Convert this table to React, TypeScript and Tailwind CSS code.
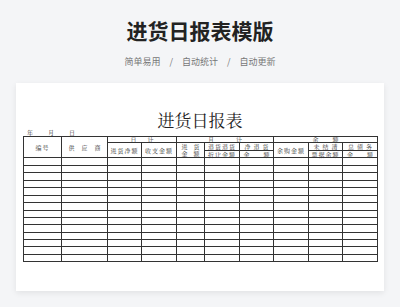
import type { ReactNode } from 'react'

const sans = { fontFamily: '"Noto Sans CJK SC", "Noto Sans", sans-serif' }
const serif = { fontFamily: '"Noto Serif CJK SC", "Noto Sans CJK SC", serif' }

function Cell({ className = '', children }: { className?: string; children?: ReactNode }) {
  return (
    <div className={`flex flex-col items-center justify-center border-r border-b border-[#333] text-[6px] leading-[7px] text-[#333] ${className}`}>
      {children}
    </div>
  )
}

export default function App() {
  const body = Array.from({ length: 140 }, (_, i) => <Cell key={i} />)

  return (
    <div className="flex h-[307px] w-[400px] flex-col items-center bg-[#f4f5f7] pt-[16px]" style={sans}>
      <h1 className="text-[21px] font-bold leading-[28px] text-[#222]">进货日报表模版</h1>
      <div className="mt-[12px] flex items-center gap-[9px] text-[9px] leading-[12px] text-[#777]">
        <span>简单易用</span>
        <span>/</span>
        <span>自动统计</span>
        <span>/</span>
        <span>自动更新</span>
      </div>

      <div className="mt-[15px] flex h-[208px] w-[368px] flex-col bg-white pt-[28px] shadow-[0_2px_6px_rgba(0,0,0,0.08)]">
        <div className="text-center text-[17px] leading-[18px] text-[#222]" style={serif}>
          进货日报表
        </div>
        <div className="ml-[11px] flex h-[7px] gap-[15px] text-[6px] leading-[7px] text-[#333]" style={serif}>
          <span>年</span>
          <span>月</span>
          <span>日</span>
        </div>

        <div
          className="ml-[7px] grid w-[355px] grid-cols-[38px_46px_34px_35px_28px_35px_34px_35px_34px_35px] grid-rows-[6px_8px_7px_8px_7px_8px_7px_8px_7px_8px_7px_7px_8px_7px_7px_8px_7px] border-t border-l border-[#333]"
          style={serif}
        >
          <Cell className="col-start-1 row-start-1 row-span-3 tracking-[1px]">编号</Cell>
          <Cell className="col-start-2 row-start-1 row-span-3">
            <div className="flex gap-[7px]">
              <span>供</span>
              <span>应</span>
              <span>商</span>
            </div>
          </Cell>
          <Cell className="col-start-3 col-span-2 row-start-1">
            <div className="flex gap-[11px]">
              <span>日</span>
              <span>计</span>
            </div>
          </Cell>
          <Cell className="col-start-3 row-start-2 row-span-2 tracking-[1px]">进货净额</Cell>
          <Cell className="col-start-4 row-start-2 row-span-2 tracking-[1px]">收支金额</Cell>
          <Cell className="col-start-5 col-span-3 row-start-1">
            <div className="flex gap-[22px]">
              <span>月</span>
              <span>计</span>
            </div>
          </Cell>
          <Cell className="col-start-5 row-start-2 row-span-2">
            <div className="flex gap-[6px]">
              <span>进</span>
              <span>货</span>
            </div>
            <div className="flex gap-[6px]">
              <span>金</span>
              <span>额</span>
            </div>
          </Cell>
          <Cell className="col-start-6 row-start-2 tracking-[1px]">退货退货</Cell>
          <Cell className="col-start-6 row-start-3 tracking-[1px]">折让金额</Cell>
          <Cell className="col-start-7 row-start-2">
            <div className="flex gap-[3px]">
              <span>净</span>
              <span>退</span>
              <span>货</span>
            </div>
          </Cell>
          <Cell className="col-start-7 row-start-3">
            <div className="flex gap-[14px]">
              <span>金</span>
              <span>额</span>
            </div>
          </Cell>
          <Cell className="col-start-8 col-span-3 row-start-1">
            <div className="flex gap-[14px]">
              <span>余</span>
              <span>额</span>
            </div>
          </Cell>
          <Cell className="col-start-8 row-start-2 row-span-2 tracking-[1px]">余购金额</Cell>
          <Cell className="col-start-9 row-start-2">
            <div className="flex gap-[3px]">
              <span>未</span>
              <span>结</span>
              <span>清</span>
            </div>
          </Cell>
          <Cell className="col-start-9 row-start-3 tracking-[1px]">票据余额</Cell>
          <Cell className="col-start-10 row-start-2">
            <div className="flex gap-[3px]">
              <span>总</span>
              <span>债</span>
              <span>务</span>
            </div>
          </Cell>
          <Cell className="col-start-10 row-start-3">
            <div className="flex gap-[14px]">
              <span>金</span>
              <span>额</span>
            </div>
          </Cell>
          {body}
        </div>
      </div>
    </div>
  )
}
